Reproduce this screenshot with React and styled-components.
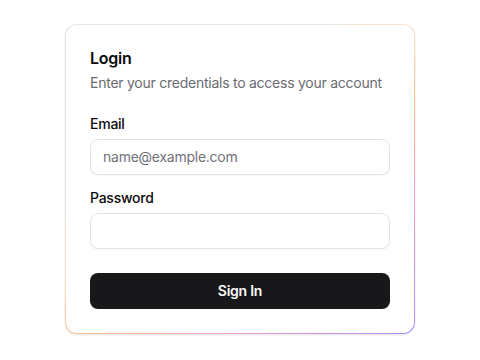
import React from 'react';
import styled, { createGlobalStyle } from 'styled-components';

const GlobalStyle = createGlobalStyle`
  * { box-sizing: border-box; }
  body {
    margin: 0;
    background: #ffffff;
    font-family: Inter, "Liberation Sans", sans-serif;
    letter-spacing: -0.25px;
    color: #0a0a0a;
  }
`;

const Page = styled.div`
  min-height: 100vh;
  display: flex;
  align-items: center;
  justify-content: center;
  padding-bottom: 3px;
`;

const Card = styled.div`
  width: 350px;
  padding: 23px 24px 24px;
  border: 1px solid transparent;
  border-radius: 12px;
  background:
    linear-gradient(#fff, #fff) padding-box,
    linear-gradient(145deg, #e5e5e5 0%, #e7e5e3 30%, #fbe2ca 44%, #fdc08a 58%, #fbab98 66%, #f6a0c8 76%, #a78bfa 100%) border-box;
  box-shadow: 0 1px 3px rgba(0, 0, 0, 0.08), 0 1px 2px rgba(0, 0, 0, 0.04);
`;

const Title = styled.h2`
  margin: 0;
  font-size: 16px;
  line-height: 20px;
  font-weight: 600;
`;

const Subtitle = styled.p`
  margin: 5px 0 0;
  font-size: 14px;
  line-height: 20px;
  color: #6b6b72;
  white-space: nowrap;
`;

const Form = styled.form`
  display: flex;
  flex-direction: column;
  gap: 13px;
  margin-top: 21px;
`;

const Field = styled.div`
  display: flex;
  flex-direction: column;
  gap: 5px;
`;

const Label = styled.label`
  font-size: 14px;
  line-height: 20px;
  font-weight: 500;
`;

const Input = styled.input`
  height: 36px;
  width: 100%;
  padding: 0 12px;
  border: 1px solid #e4e4e7;
  border-radius: 8px;
  font-family: inherit;
  font-size: 14px;
  letter-spacing: -0.25px;
  color: #0a0a0a;
  background: #fff;
  box-shadow: 0 1px 2px rgba(0, 0, 0, 0.03);
  outline: none;

  &::placeholder {
    color: #71717a;
  }
`;

const Button = styled.button`
  margin-top: 11px;
  height: 36px;
  width: 100%;
  border: none;
  border-radius: 8px;
  background: #18181b;
  color: #fafafa;
  font-family: inherit;
  font-size: 14px;
  letter-spacing: -0.25px;
  font-weight: 600;
  cursor: pointer;
`;

const App = () => {
  return (
    <Page>
      <GlobalStyle />
      <Card>
        <Title>Login</Title>
        <Subtitle>Enter your credentials to access your account</Subtitle>
        <Form onSubmit={(e) => e.preventDefault()}>
          <Field>
            <Label htmlFor="email">Email</Label>
            <Input id="email" type="email" placeholder="name@example.com" />
          </Field>
          <Field>
            <Label htmlFor="password">Password</Label>
            <Input id="password" type="password" />
          </Field>
          <Button type="submit">Sign In</Button>
        </Form>
      </Card>
    </Page>
  );
};

export default App;
